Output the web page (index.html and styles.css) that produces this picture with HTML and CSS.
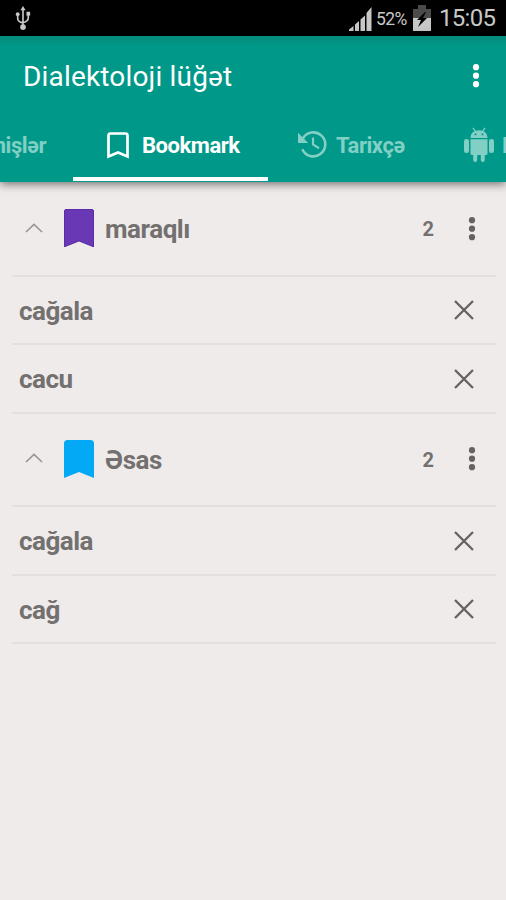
FILE: index.html
```html
<!DOCTYPE html>
<html lang="az">
<head>
<meta charset="utf-8">
<title>Dialektoloji lüğət</title>
<link rel="stylesheet" href="styles.css">
</head>
<body>
<svg width="0" height="0" class="defs">
  <symbol id="dots" viewBox="0 0 8 26"><circle cx="4" cy="4.2" r="3.1"/><circle cx="4" cy="12.7" r="3.1"/><circle cx="4" cy="21.2" r="3.1"/></symbol>
  <symbol id="close" viewBox="0 0 20 20"><path d="M1 1 19 19M19 1 1 19" fill="none" stroke="currentColor" stroke-width="2.3"/></symbol>
  <symbol id="chevron" viewBox="0 0 18 10"><path d="M1 9 9 1.4 17 9" fill="none" stroke="currentColor" stroke-width="1.6"/></symbol>
  <symbol id="ribbon" viewBox="0 0 30 38"><path d="M3.500 0H26.500Q30 0 30 3.500V38L15 32 0 38V3.500Q0 0 3.500 0Z"/></symbol>
</svg>
<div class="status">
  <svg class="usb" viewBox="0 0 16 26"><path d="M8 3V23M2.500 8V13Q2.500 16.500 8 17.500Q13.500 16 13.500 12V8" fill="none" stroke="currentColor" stroke-width="1.7"/><path d="M8 0 10.700 4.500H5.300Z"/><circle cx="2.500" cy="8.500" r="2"/><path d="M11.600 6h3.800v4h-3.800z"/><circle cx="8" cy="22" r="2.900"/></svg>
  <div class="status-right">
    <svg class="signal" viewBox="0 0 23 24"><path d="M0 24V22.500L4.500 19V24ZM6 24V17.500L10 14V24ZM11.500 24V12.500L16 8.500V24ZM17.500 24V6L22.500 0V24Z"/></svg>
    <span class="percent">52%</span>
    <svg class="battery" viewBox="0 0 18 26"><path d="M5 0H13V4H18V13H0V4H5Z" fill="#4b4b4b"/><path d="M0 13H18V26H0Z" fill="#c8c8c8"/><path d="M12 7 4 15H8L5 22 14 13H10L13 7Z" fill="#000"/></svg>
    <span class="clock">15:05</span>
  </div>
</div>
<header class="appbar">
  <div class="toolbar"><h1>Dialektoloji lüğət</h1><svg class="dots"><use href="#dots"/></svg></div>
  <nav class="tabs">
    <div class="tab tab-first"><span>Seçilmişlər</span></div>
    <div class="tab tab-active">
      <svg class="tab-bookmark" viewBox="0 0 22 27"><path d="M3.500 1.500H18.500Q20.500 1.500 20.500 3.500V24.500L11 20.500 1.500 24.500V3.500Q1.500 1.500 3.500 1.500Z" fill="none" stroke="currentColor" stroke-width="2.700"/></svg>
      <span>Bookmark</span>
    </div>
    <div class="tab tab-history">
      <svg class="history" viewBox="0 0 29 28"><path d="M4.800 8.500A12 12 0 1 1 4.300 19.200" fill="none" stroke="currentColor" stroke-width="2.600"/><path d="M0 2.800V13H10.200L6.700 9.500Z"/><path d="M15 7.500V14.500L21 18.200" fill="none" stroke="currentColor" stroke-width="2.200"/></svg>
      <span>Tarixçə</span>
    </div>
    <div class="tab tab-last">
      <svg class="android" viewBox="0 0 30 36"><path d="M9 .8 11.500 4.500M21 .8 18.500 4.500" stroke="currentColor" stroke-width="1.300"/><path fill-rule="evenodd" d="M6.500 11C6.500 6 10 3.200 15 3.200S23.500 6 23.500 11ZM10.700 6.500V8.200H12.400V6.500ZM17.600 6.500V8.200H19.300V6.500Z"/><path d="M6.500 12.200H23.500V26.500Q23.500 28 22 28H20.800V33Q20.800 35 18.800 35T16.800 33V28H13.200V33Q13.200 35 11.200 35T9.200 33V28H8Q6.500 28 6.500 26.500Z"/><rect y="12" width="5" height="14" rx="2.300"/><rect x="25" y="12" width="5" height="14" rx="2.300"/></svg>
      <span>Dialekt</span>
    </div>
  </nav>
</header>
<main>
  <section>
    <div class="group"><svg class="chevron"><use href="#chevron"/></svg><svg class="ribbon purple"><use href="#ribbon"/></svg><h2>maraqlı</h2><span class="count">2</span><svg class="dots"><use href="#dots"/></svg></div>
    <div class="item"><span>cağala</span><svg class="close"><use href="#close"/></svg></div>
    <div class="item"><span>cacu</span><svg class="close"><use href="#close"/></svg></div>
  </section>
  <section>
    <div class="group"><svg class="chevron"><use href="#chevron"/></svg><svg class="ribbon blue"><use href="#ribbon"/></svg><h2>Əsas</h2><span class="count">2</span><svg class="dots"><use href="#dots"/></svg></div>
    <div class="item"><span>cağala</span><svg class="close"><use href="#close"/></svg></div>
    <div class="item"><span>cağ</span><svg class="close"><use href="#close"/></svg></div>
  </section>
</main>
</body>
</html>
```
FILE: styles.css
```css
* { box-sizing: border-box; }
body { margin: 0; width: 506px; height: 900px; overflow: hidden; background: #efebea; font-family: Roboto, "Noto Sans", sans-serif; color: #737070; }
svg { display: block; flex: none; fill: currentColor; }
.defs { position: absolute; }
.status { height: 36px; padding: 0 11px 0 15px; background: #000; color: #c8c8c8; display: flex; justify-content: space-between; align-items: center; }
.usb { width: 16px; height: 25px; }
.status-right { display: flex; align-items: center; }
.signal { width: 23px; height: 24px; margin-top: 1px; }
.percent { font-size: 17.5px; width: 37px; margin: 2px 0 0 4px; letter-spacing: -.6px; white-space: nowrap; }
.battery { width: 18px; height: 26px; }
.clock { font-size: 24px; width: 56px; margin-left: 8px; white-space: nowrap; letter-spacing: -.7px; }
.appbar { position: relative; height: 146px; background: linear-gradient(#058b7c, #009888 10px); color: #fff; box-shadow: 0 2px 9px rgba(0,0,0,.55); }
.toolbar { height: 80px; padding: 0 26px 0 23px; display: flex; align-items: center; justify-content: space-between; }
h1 { margin: 0; font-size: 28px; font-weight: 400; letter-spacing: .17px; white-space: nowrap; }
.dots { width: 8px; height: 26px; }
.tabs { display: flex; height: 66px; overflow: hidden; font-size: 22px; font-weight: 700; letter-spacing: -.45px; }
.tab { flex: none; display: flex; align-items: center; height: 66px; padding-bottom: 8px; color: #81cfc5; white-space: nowrap; }
.tab-first { width: 73px; padding-right: 27px; justify-content: flex-end; }
.tab-active { width: 195px; padding: 0 0 3px 34px; border-bottom: 5px solid #fff; border-bottom-width: 4px; margin-bottom: 1px; height: 65px; color: #fff; gap: 13px; }
.tab-bookmark { width: 22px; height: 27px; }
.tab-history { width: 167px; padding-left: 30px; gap: 9px; }
.history { width: 29px; height: 28px; margin-top: -2px; }
.tab-last { width: 150px; padding-left: 29px; gap: 8px; }
.android { width: 30px; height: 36px; }
main { padding: 1px 10px 0 12px; }
.group, .item { display: flex; align-items: center; border-bottom: 2px solid #e3dfde; }
.group { height: 93.5px; padding: 0 20px 0 13px; }
.item { height: 68.5px; padding: 2px 22px 0 7px; justify-content: space-between; font-size: 26px; font-weight: 700; letter-spacing: -.5px; }
.chevron { width: 18px; height: 10px; color: #999595; margin-top: -2px; }
.ribbon { width: 30px; height: 38px; margin-left: 21px; margin-top: -1px; }
.purple { color: #6939b5; stroke: #4e16a0; stroke-width: .8; }
.blue { color: #03a9f4; }
h2 { margin: 1px auto 0 11px; font-size: 26px; font-weight: 700; letter-spacing: -.45px; }
.count { font-size: 20px; font-weight: 700; margin: 1px 34px 0 0; }
.group .dots, .close { color: #656262; }
.close { width: 20px; height: 20px; margin-top: -1px; }
```
